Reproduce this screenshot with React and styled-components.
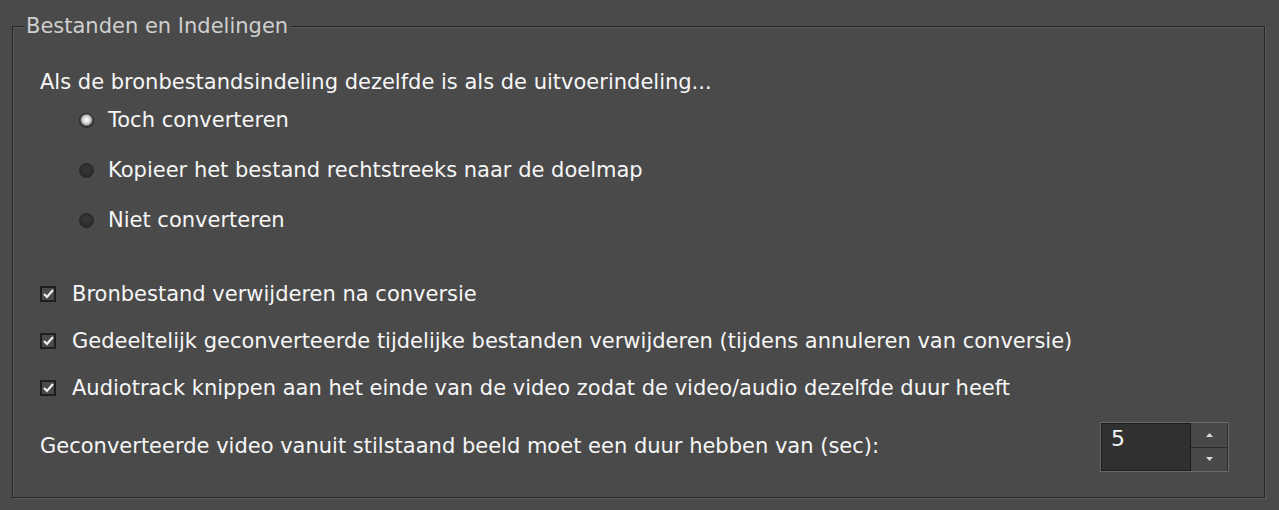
import React from "react";
import styled, { createGlobalStyle } from "styled-components";

const Global = createGlobalStyle`
  html, body { margin: 0; padding: 0; background: #4a4a4a; }
  body { font-family: "DejaVu Sans", Tahoma, sans-serif; }
`;

const Page = styled.div`
  width: 1279px;
  height: 510px;
  box-sizing: border-box;
  padding: 26px 14px 12px 12px;
  background: #4a4a4a;
`;

const Group = styled.fieldset`
  margin: 0;
  height: 472px;
  box-sizing: border-box;
  border: 1px solid #262626;
  box-shadow: inset 1px 1px 0 #5a5a5a, 1px 1px 0 #5a5a5a;
  padding: 0 0 0 27px;
  display: flex;
  flex-direction: column;
  position: relative;
`;

const Legend = styled.legend`
  position: absolute;
  top: -13px;
  left: 11px;
  padding: 0 2px 0 2px;
  background: #4a4a4a;
  color: #cfcfcf;
  font-size: 21px;
  line-height: 24px;
`;

const Text = styled.span`
  color: #f6f6f6;
  font-size: 21px;
  line-height: 24px;
  white-space: nowrap;
`;

const Intro = styled.div`
  height: 24px;
  display: flex;
  align-items: center;
  margin-top: 43px;
`;

const RadioList = styled.div`
  display: flex;
  flex-direction: column;
  gap: 26px;
  margin-top: 14px;
  padding-left: 39px;
`;

const Row = styled.div`
  height: 24px;
  display: flex;
  align-items: center;
  gap: ${p => p.$gap}px;
`;

const RadioDot = styled.span`
  width: 15px;
  height: 15px;
  border-radius: 50%;
  box-sizing: border-box;
  border: 1px solid #262626;
  background: ${p =>
    p.$on
      ? "radial-gradient(circle at 50% 45%, #ffffff 0, #e2e2e2 3px, #a8a8a8 5px, #383838 6.5px)"
      : "radial-gradient(circle at 50% 40%, #383838 0, #2c2c2c 7px)"};
`;

const CheckList = styled.div`
  display: flex;
  flex-direction: column;
  gap: 23px;
  margin-top: 50px;
`;

const Box = styled.span`
  width: 16px;
  height: 16px;
  box-sizing: border-box;
  border: 2px solid #1e1e1e;
  background: #4a4a4a;
  display: flex;
  align-items: center;
  justify-content: center;
`;

const LastRow = styled.div`
  display: flex;
  align-items: center;
  justify-content: space-between;
  margin-top: 20px;
  padding-right: 35px;
`;

const Spin = styled.div`
  display: flex;
  height: 50px;
  border: 1px solid #6a6a6a;
  box-sizing: border-box;
  margin-top: 2px;
`;

const SpinField = styled.div`
  width: 90px;
  background: #303030;
  border: 1px solid #1a1a1a;
  box-sizing: border-box;
  color: #f4f4f4;
  font-size: 22px;
  padding: 2px 0 0 9px;
`;

const SpinButtons = styled.div`
  width: 37px;
  display: flex;
  flex-direction: column;
`;

const SpinButton = styled.div`
  flex: 1;
  background: #484848;
  border-bottom: ${p => (p.$top ? "1px solid #2a2a2a" : "none")};
  border-right: 1px solid #2a2a2a;
  display: flex;
  align-items: center;
  justify-content: center;
`;

const Check = () => (
  <Box>
    <svg width="11" height="10" viewBox="0 0 11 10">
      <path d="M1 5 L4 8 L10 1" stroke="#f0f0f0" strokeWidth="2.2" fill="none" />
    </svg>
  </Box>
);

const Arrow = ({ up }) => (
  <svg width="7" height="4" viewBox="0 0 7 4">
    <path d={up ? "M0 4 L3.5 0 L7 4 Z" : "M0 0 L3.5 4 L7 0 Z"} fill="#dcdcdc" />
  </svg>
);

export default function App() {
  const radios = [
    ["Toch converteren", true],
    ["Kopieer het bestand rechtstreeks naar de doelmap", false],
    ["Niet converteren", false],
  ];
  const checks = [
    "Bronbestand verwijderen na conversie",
    "Gedeeltelijk geconverteerde tijdelijke bestanden verwijderen (tijdens annuleren van conversie)",
    "Audiotrack knippen aan het einde van de video zodat de video/audio dezelfde duur heeft",
  ];
  return (
    <Page>
      <Global />
      <Group>
        <Legend>Bestanden en Indelingen</Legend>
        <Intro>
          <Text>Als de bronbestandsindeling dezelfde is als de uitvoerindeling...</Text>
        </Intro>
        <RadioList>
          {radios.map(([t, on]) => (
            <Row key={t} $gap={14}>
              <RadioDot $on={on} />
              <Text>{t}</Text>
            </Row>
          ))}
        </RadioList>
        <CheckList>
          {checks.map(t => (
            <Row key={t} $gap={16}>
              <Check />
              <Text>{t}</Text>
            </Row>
          ))}
        </CheckList>
        <LastRow>
          <Text>Geconverteerde video vanuit stilstaand beeld moet een duur hebben van (sec):</Text>
          <Spin>
            <SpinField>5</SpinField>
            <SpinButtons>
              <SpinButton $top><Arrow up /></SpinButton>
              <SpinButton><Arrow /></SpinButton>
            </SpinButtons>
          </Spin>
        </LastRow>
      </Group>
    </Page>
  );
}
